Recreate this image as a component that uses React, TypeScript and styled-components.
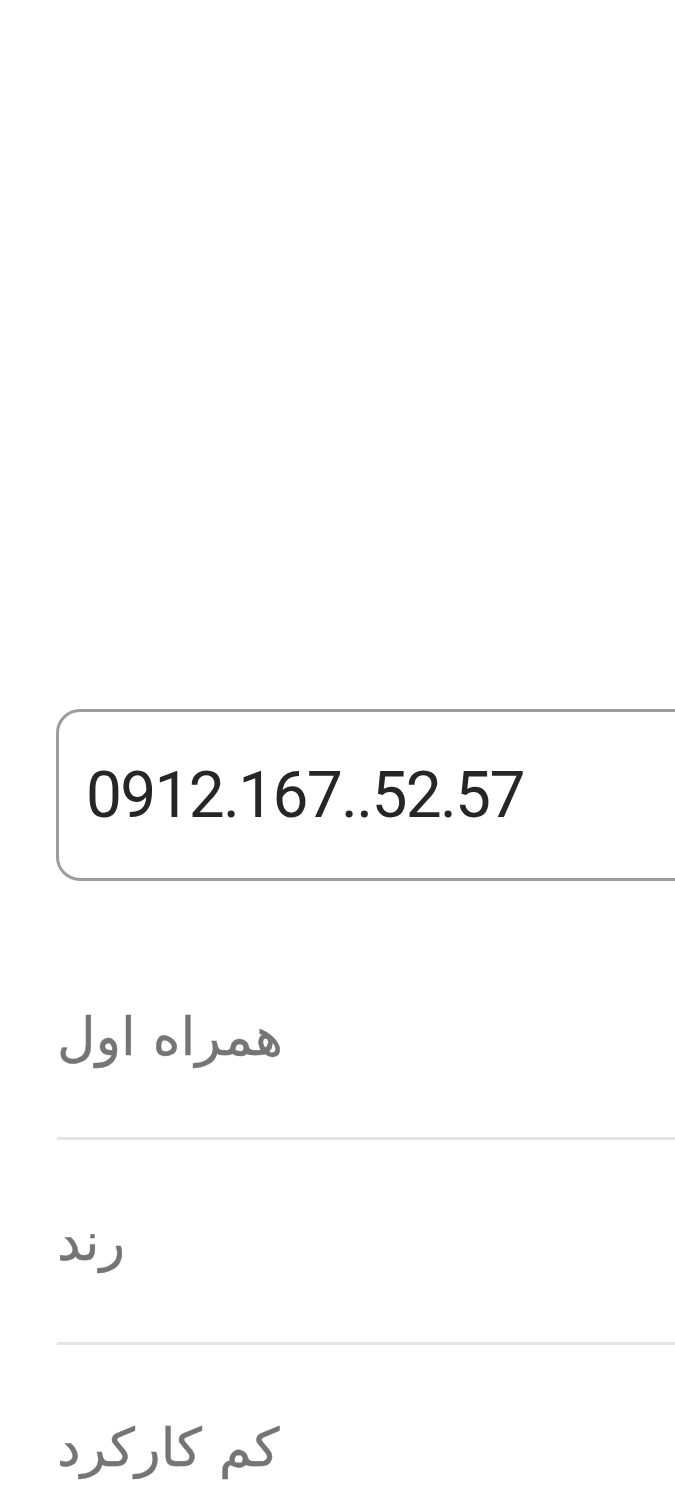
import styled, { createGlobalStyle } from "styled-components";

const GlobalStyle = createGlobalStyle`
  html, body {
    margin: 0;
    padding: 0;
    background: #ffffff;
    overflow-x: hidden;
  }
`;

const Page = styled.main`
  width: 675px;
  min-height: 1500px;
  overflow: hidden;
  padding-top: 709px;
  box-sizing: border-box;
`;

const NumberBox = styled.div`
  margin-left: 56px;
  width: 680px;
  height: 172px;
  box-sizing: border-box;
  border: 3px solid #9d9d9d;
  border-radius: 24px;
  display: flex;
  align-items: center;
  padding-left: 27px;
  font-family: Roboto, "Liberation Sans", sans-serif;
  font-size: 64px;
  letter-spacing: -1.7px;
  color: #262626;
`;

const List = styled.ul`
  list-style: none;
  margin: 54px 0 0 57px;
  padding: 0;
  width: 680px;
`;

const Item = styled.li<{ $last?: boolean }>`
  height: 205px;
  box-sizing: border-box;
  display: flex;
  align-items: center;
  justify-content: flex-start;
  direction: ltr;
  border-bottom: ${(p) => (p.$last ? "none" : "3px solid #e4e4e4")};
  font-family: "DejaVu Sans", "Noto Sans", sans-serif;
  font-size: 53px;
  color: #757575;
  -webkit-text-stroke: 0.4px #757575;
`;

const Label = styled.span`
  direction: rtl;
`;

const operators = ["همراه اول", "رند", "کم کارکرد"];

export default function App() {
  return (
    <>
      <GlobalStyle />
      <Page>
        <NumberBox>0912.167..52.57</NumberBox>
        <List>
          {operators.map((name, i) => (
            <Item key={name} $last={i === operators.length - 1}>
              <Label>{name}</Label>
            </Item>
          ))}
        </List>
      </Page>
    </>
  );
}
